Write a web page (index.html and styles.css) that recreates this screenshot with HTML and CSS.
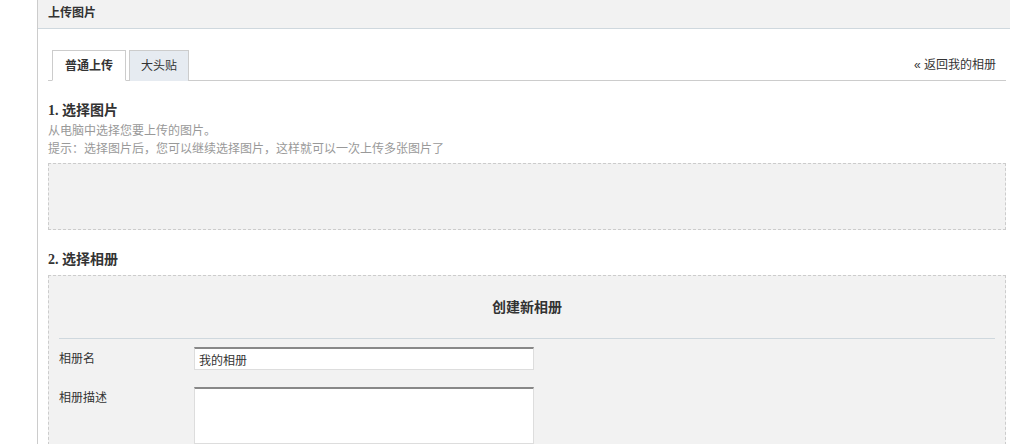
FILE: index.html
```html
<!DOCTYPE html>
<html>

<head>
    <meta charset="utf-8">
    <link rel="stylesheet" href="styles.css">
</head>

<body>
    <div class="page">
        <div class="main">
            <div class="titleBar">上传图片</div>
            <div class="content">
                <div class="tabBar">
                    <div class="tabs">
                        <div class="tab tabActive">普通上传</div>
                        <div class="tab">大头贴</div>
                    </div>
                    <a class="backLink" href="#">« 返回我的相册</a>
                </div>

                <h3 class="stepTitle firstStep">1. 选择图片</h3>
                <div class="hint">从电脑中选择您要上传的图片。</div>
                <div class="hint">提示：选择图片后，您可以继续选择图片，这样就可以一次上传多张图片了</div>
                <div class="dropBox"></div>

                <h3 class="stepTitle">2. 选择相册</h3>
                <div class="albumBox">
                    <div class="albumTitle">创建新相册</div>
                    <div class="formRow">
                        <label class="formLabel">相册名</label>
                        <input type="text" class="formInput" value="我的相册">
                    </div>
                    <div class="formRow">
                        <label class="formLabel">相册描述</label>
                        <textarea class="formArea"></textarea>
                    </div>
                </div>
            </div>
        </div>
    </div>
</body>

</html>
```

FILE: styles.css
```css
html, body {
    margin: 0;
    padding: 0;
    background: #fff;
}

body {
    font-family: "Liberation Sans", "Noto Sans CJK SC", sans-serif;
    font-size: 12px;
    color: #333;
    height: 444px;
    overflow: hidden;
}

.page {
    padding-left: 37px;
}

.main {
    border-left: 1px solid #ccc;
    height: 444px;
    box-sizing: border-box;
    overflow: hidden;
}

.titleBar {
    height: 28px;
    line-height: 27px;
    background: #f2f2f2;
    border-bottom: 1px solid #cfd8de;
    padding-left: 10px;
    font-weight: bold;
}

.content {
    padding: 20px 4px 0px 10px;
}

.tabBar {
    display: flex;
    justify-content: space-between;
    align-items: center;
    border-bottom: 1px solid #ccc;
    height: 31px;
}

.tabs {
    display: flex;
    align-self: flex-end;
    padding-left: 4px;
    gap: 3px;
    margin-bottom: -1px;
}

.tab {
    line-height: 30px;
    padding: 0px 11px;
    border: 1px solid #ccc;
    border-bottom: none;
    background: #e6ebf1;
    box-sizing: border-box;
    height: 31px;
}

.tabActive {
    background: #fff;
    font-weight: bold;
    padding: 0px 12px 1px 12px;
    border-bottom: 1px solid #fff;
}

.backLink {
    color: #333;
    text-decoration: none;
    margin-right: 10px;
    line-height: 18px;
}

.stepTitle {
    font-family: "Liberation Serif", "Noto Sans CJK SC", serif;
    font-size: 14px;
    line-height: 20px;
    margin: 20px 0px 1px 0px;
    color: #333;
}

.hint {
    color: #999;
    line-height: 18px;
}

.dropBox {
    margin-top: 5px;
    height: 65px;
    background: #f2f2f2;
    border: 1px dashed #ccc;
}

.albumBox {
    margin-top: 5px;
    background: #f2f2f2;
    border: 1px dashed #ccc;
    padding: 0px 10px 0px 10px;
}

.albumTitle {
    text-align: center;
    font-weight: bold;
    font-size: 14px;
    line-height: 20px;
    padding: 21px 0px 21px 0px;
    border-bottom: 1px solid #cfd8de;
}

.formRow {
    display: flex;
    align-items: flex-start;
    margin-top: 8px;
}

.formLabel {
    width: 135px;
    height: 23px;
    line-height: 23px;
    padding-top: 1px;
    box-sizing: border-box;
}

.formInput,
.formArea {
    width: 340px;
    box-sizing: border-box;
    border: 1px solid #ddd;
    border-top: 2px solid #888;
    background: #fff;
    font-family: "Liberation Sans", "Noto Sans CJK SC", sans-serif;
    font-size: 12px;
    color: #333;
    margin: 0;
    outline: none;
}

.formInput {
    height: 23px;
    padding: 0px 4px;
}

.formArea {
    height: 57px;
    resize: none;
    margin-top: 9px;
}

.formRow + .formRow .formLabel {
    margin-top: 8px;
}
```
